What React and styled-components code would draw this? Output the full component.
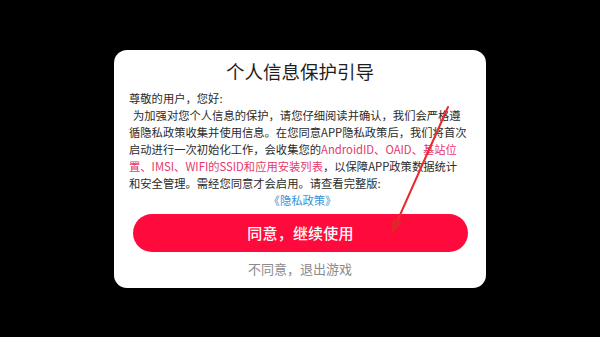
import React from 'react';
import styled, { createGlobalStyle } from 'styled-components';

const Global = createGlobalStyle`
  html, body {
    margin: 0;
    padding: 0;
    background: #000;
  }
  body {
    font-family: "Noto Sans CJK SC", "Noto Sans", sans-serif;
  }
`;

const Screen = styled.div`
  position: relative;
  width: 600px;
  height: 337px;
  background: #000;
  display: flex;
  align-items: center;
  justify-content: center;
  overflow: hidden;
`;

const Card = styled.div`
  width: 372px;
  height: 238px;
  box-sizing: border-box;
  background: #fff;
  border-radius: 13px;
  padding: 9px 0 8px;
  display: flex;
  flex-direction: column;
`;

const Title = styled.h1`
  margin: 0;
  font-size: 18.5px;
  line-height: 24px;
  font-weight: 400;
  color: #1e1e1e;
  text-align: center;
`;

const Body = styled.div`
  margin-top: 7px;
  padding: 0 10px 0 15px;
  font-size: 11.3px;
  line-height: 17px;
  color: #2b2b2b;
  white-space: nowrap;
`;

const Line = styled.div`
  padding-left: ${(p) => (p.$indent ? '4px' : '0')};
  text-align: ${(p) => (p.$center ? 'center' : 'left')};
`;

const Pink = styled.span`
  color: #e5396b;
`;

const Link = styled.span`
  color: #3a8fd6;
`;

const AgreeButton = styled.button`
  margin: 5px 18px 0 19px;
  height: 38px;
  border: none;
  border-radius: 19px;
  background: #ff0a3c;
  color: #fff;
  font-family: inherit;
  font-size: 15px;
  font-weight: 500;
  letter-spacing: 0.2px;
  display: flex;
  align-items: center;
  justify-content: center;
`;

const Decline = styled.div`
  margin-top: 7px;
  text-align: center;
  font-size: 13px;
  line-height: 20px;
  color: #8a8a8a;
`;

const Arrow = styled.svg`
  position: absolute;
  left: 0;
  top: 0;
  pointer-events: none;
`;

export default function App() {
  return (
    <>
      <Global />
      <Screen>
        <Card>
          <Title>个人信息保护引导</Title>
          <Body>
            <Line>尊敬的用户，您好:</Line>
            <Line $indent>为加强对您个人信息的保护，请您仔细阅读并确认，我们会严格遵</Line>
            <Line>循隐私政策收集并使用信息。在您同意APP隐私政策后，我们将首次</Line>
            <Line>
              启动进行一次初始化工作，会收集您的<Pink>AndroidID、OAID、基站位</Pink>
            </Line>
            <Line>
              <Pink>置、IMSI、WIFI的SSID和应用安装列表</Pink>，以保障APP政策数据统计
            </Line>
            <Line>和安全管理。需经您同意才会启用。请查看完整版:</Line>
            <Line $center>
              <Link>《隐私政策》</Link>
            </Line>
          </Body>
          <AgreeButton>同意，继续使用</AgreeButton>
          <Decline>不同意，退出游戏</Decline>
        </Card>
        <Arrow width="600" height="337" viewBox="0 0 600 337">
          <line x1="448" y1="107" x2="396" y2="224" stroke="#ea2a2e" strokeWidth="2" strokeLinecap="round" />
          <polygon points="391,235 402.5,222.6 392.6,218.2" fill="#e3242c" />
        </Arrow>
      </Screen>
    </>
  );
}
